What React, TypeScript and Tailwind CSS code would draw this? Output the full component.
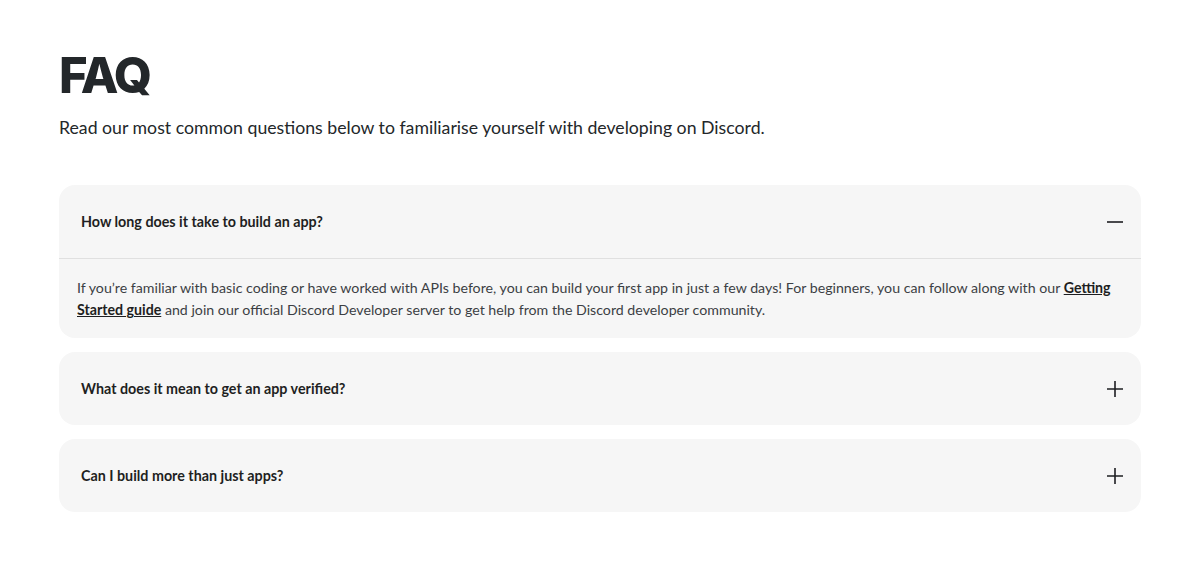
import React from "react";

const Minus = () => (
  <svg width="18" height="18" viewBox="0 0 18 18" fill="none">
    <path d="M1 9h16" stroke="#1e1f22" strokeWidth="1.6" />
  </svg>
);
const Plus = () => (
  <svg width="18" height="18" viewBox="0 0 18 18" fill="none">
    <path d="M1 9h16M9 1v16" stroke="#1e1f22" strokeWidth="1.6" />
  </svg>
);

const Item = ({ q, open, children }: { q: string; open?: boolean; children?: React.ReactNode }) => (
  <div className="rounded-2xl bg-[#f6f6f6]">
    <div className="flex h-[73px] items-center justify-between pl-[22px] pr-[17px]">
      <span className="text-[14.3px] font-bold text-[#1e1f22]">{q}</span>
      {open ? <Minus /> : <Plus />}
    </div>
    {open && (
      <div className="border-t border-[#e0e0e0] px-[18px] pt-[18px] pb-[17px] text-[14.2px] leading-[22px] text-[#3c3f44]">
        {children}
      </div>
    )}
  </div>
);

export default function App() {
  return (
    <div className="min-h-[572px] bg-white px-[59px] pt-[50px]" style={{ fontFamily: 'Lato, "Noto Sans", sans-serif' }}>
      <h1 className="text-[49px] leading-[52px] font-extrabold tracking-tighter text-[#23272a]" style={{ fontFamily: 'Inter, sans-serif' }}>FAQ</h1>
      <p className="mt-[13px] text-[17.7px] leading-[26px] text-[#23272a]">
        Read our most common questions below to familiarise yourself with developing on Discord.
      </p>
      <div className="mt-[44px] flex flex-col gap-[14px]">
        <Item q="How long does it take to build an app?" open>
          If you’re familiar with basic coding or have worked with APIs before, you can build your first app in just a few days! For beginners, you can follow along with our{" "}
          <a className="font-bold text-[#1e1f22] underline">Getting Started guide</a> and join our official Discord Developer server to get help from the Discord developer community.
        </Item>
        <Item q="What does it mean to get an app verified?" />
        <Item q="Can I build more than just apps?" />
      </div>
    </div>
  );
}
